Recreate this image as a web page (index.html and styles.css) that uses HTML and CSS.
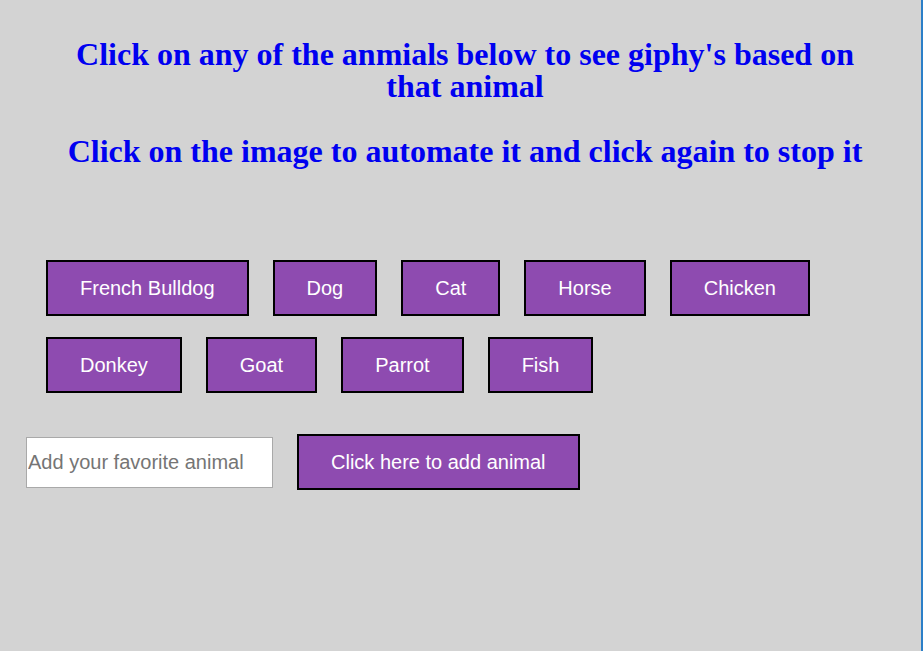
FILE: index.html
```html
<!DOCTYPE html>
<html>
<head>
<meta charset="utf-8">
<title>Giphy Animals</title>
<link rel="stylesheet" href="styles.css">
</head>
<body>
<div class="page">
  <header class="intro">
    <h1 class="title">Click on any of the anmials below to see giphy's based on that animal</h1>
    <h1 class="title subtitle">Click on the image to automate it and click again to stop it</h1>
  </header>
  <div class="animal-buttons">
    <button class="animal-btn">French Bulldog</button>
    <button class="animal-btn">Dog</button>
    <button class="animal-btn">Cat</button>
    <button class="animal-btn">Horse</button>
    <button class="animal-btn">Chicken</button>
    <button class="animal-btn">Donkey</button>
    <button class="animal-btn">Goat</button>
    <button class="animal-btn">Parrot</button>
    <button class="animal-btn">Fish</button>
  </div>
  <form class="add-form">
    <input class="animal-input" type="text" placeholder="Add your favorite animal">
    <button class="animal-btn add-btn" type="button">Click here to add animal</button>
  </form>
</div>
<div class="edge"></div>
</body>
</html>
```

FILE: styles.css
```css
html, body {
  margin: 0;
  padding: 0;
  height: 100%;
}
body {
  background: #d3d3d3;
  font-family: "Liberation Sans", Arial, sans-serif;
  overflow: hidden;
}
.page {
  padding-top: 38px;
}
.intro {
  width: 840px;
  margin-left: 45px;
  text-align: center;
}
.title {
  margin: 0;
  font-family: "Liberation Serif", "Times New Roman", serif;
  font-weight: bold;
  font-size: 32px;
  line-height: 32px;
  color: #0000f0;
}
.subtitle {
  margin-top: 33px;
}
.animal-buttons {
  display: flex;
  flex-wrap: wrap;
  column-gap: 24px;
  row-gap: 21px;
  margin: 93px 0 0 46px;
  width: 850px;
}
.animal-btn {
  background: #8e4bb0;
  color: #ffffff;
  border: 2px solid #000000;
  border-radius: 0;
  font-family: "Liberation Sans", Arial, sans-serif;
  font-size: 20px;
  line-height: 24px;
  padding: 14px 32px;
  margin: 0;
}
.add-form {
  display: flex;
  align-items: center;
  gap: 24px;
  margin: 41px 0 0 26px;
}
.animal-input {
  box-sizing: border-box;
  width: 247px;
  height: 51px;
  border: 1px solid #a9a9a9;
  background: #ffffff;
  padding: 0 1px;
  font-family: "Liberation Sans", Arial, sans-serif;
  font-size: 20px;
  color: #000;
  margin: 0;
}
.animal-input::placeholder {
  color: #757575;
}
.edge {
  position: fixed;
  top: 0;
  right: 0;
  width: 2px;
  height: 100%;
  background: #2b7fc8;
}
```
